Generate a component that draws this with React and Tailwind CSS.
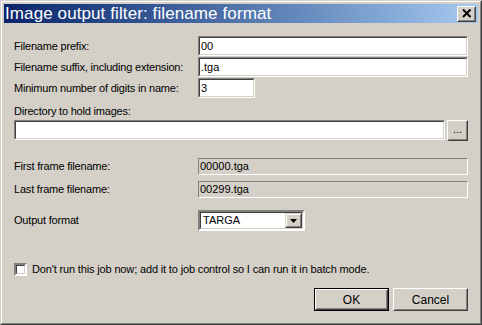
const SUNKEN = 'border-2 border-t-[#808080] border-l-[#808080] border-b-white border-r-white'
const SUNKEN_IN = 'border border-t-[#404040] border-l-[#404040] border-b-[#d4d0c8] border-r-[#d4d0c8]'

function TextBox({ value, className = '' }) {
  return (
    <div className={`border border-t-[#808080] border-l-[#808080] border-b-white border-r-white ${className}`}>
      <div className={`h-full bg-white ${SUNKEN_IN} flex items-center pl-[1px] leading-none`}>
        {value}
      </div>
    </div>
  )
}

function ReadOnly({ value }) {
  return (
    <div className="flex-1 h-[17px] border border-t-[#808080] border-l-[#808080] border-b-white border-r-white flex items-center pl-[1px] leading-none">
      {value}
    </div>
  )
}

function Button({ children, isDefault, className = '' }) {
  const inner = (
    <div className="h-full border border-t-white border-l-white border-b-[#404040] border-r-[#404040]">
      <div className="h-full border border-t-[#d4d0c8] border-l-[#d4d0c8] border-b-[#808080] border-r-[#808080] flex items-center justify-center text-[12px]">
        {children}
      </div>
    </div>
  )
  if (isDefault) {
    return <div className={`border border-black ${className}`}>{inner}</div>
  }
  return <div className={className}>{inner}</div>
}

function Row({ label, children, className = '' }) {
  return (
    <div className={`flex items-center ${className}`}>
      <div className="w-[184px] shrink-0 tracking-[-0.2px]">{label}</div>
      {children}
    </div>
  )
}

function TitleBar() {
  return (
    <div className="h-[19px] flex items-center bg-gradient-to-r from-[#0a246a] to-[#a6caf0] pl-[1px] pr-[2px]">
      <span className="flex-1 text-white text-[17px] leading-none tracking-[0.1px]">
        Image output filter: filename format
      </span>
      <div className="w-[19px] h-[16px] border border-t-white border-l-white border-b-[#404040] border-r-[#404040]">
        <div className="h-full border border-t-[#d4d0c8] border-l-[#d4d0c8] border-b-[#808080] border-r-[#808080] bg-[#d4d0c8] flex items-center justify-center">
          <svg width="10" height="9" viewBox="0 0 10 9">
            <path d="M1 0.5 L8.5 8 M8.5 0.5 L1 8" stroke="black" strokeWidth="2" />
          </svg>
        </div>
      </div>
    </div>
  )
}

export default function App() {
  return (
    <div className="w-[482px] h-[325px] bg-[#d4d0c8] font-['Liberation_Sans',Arial,sans-serif] text-[11px] text-black">
      <div className="h-full border border-t-[#d4d0c8] border-l-[#d4d0c8] border-b-[#404040] border-r-[#404040]">
        <div className="h-full border border-t-white border-l-white border-b-[#808080] border-r-[#808080] p-[2px] flex flex-col">
          <TitleBar />
          <div className="flex flex-col px-[10px] pt-[13px]">
            <Row label="Filename prefix:">
              <TextBox value="00" className="flex-1 h-[20px]" />
            </Row>
            <Row label="Filename suffix, including extension:" className="mt-[1px]">
              <TextBox value=".tga" className="flex-1 h-[20px]" />
            </Row>
            <Row label="Minimum number of digits in name:" className="mt-[1px]">
              <TextBox value="3" className="w-[57px] h-[20px]" />
            </Row>

            <div className="mt-[7px] leading-[13px] tracking-[-0.2px]">Directory to hold images:</div>
            <div className="flex mt-[2px] h-[20px]">
              <TextBox value="" className="flex-1 h-[20px]" />
              <Button className="w-[21px] h-[21px] ml-[2px]">
                <span className="text-[11px] leading-none -mt-[2px]">...</span>
              </Button>
            </div>

            <Row label="First frame filename:" className="mt-[18px]">
              <ReadOnly value="00000.tga" />
            </Row>
            <Row label="Last frame filename:" className="mt-[6px]">
              <ReadOnly value="00299.tga" />
            </Row>

            <Row label="Output format" className="mt-[12px]">
              <div className={`w-[107px] h-[21px] ${SUNKEN}`}>
                <div className={`h-full bg-white ${SUNKEN_IN} flex items-center`}>
                  <span className="flex-1 pl-[2px] leading-none">TARGA</span>
                  <div className="w-[17px] h-full border border-t-[#d4d0c8] border-l-[#d4d0c8] border-b-[#404040] border-r-[#404040]">
                    <div className="h-full border border-t-white border-l-white border-b-[#808080] border-r-[#808080] bg-[#d4d0c8] flex items-center justify-center">
                      <svg width="7" height="4" viewBox="0 0 7 4">
                        <path d="M0 0 H7 L3.5 4 Z" fill="black" />
                      </svg>
                    </div>
                  </div>
                </div>
              </div>
            </Row>

            <div className="flex items-center mt-[32px]">
              <div className={`w-[13px] h-[13px] ${SUNKEN}`}>
                <div className={`h-full bg-white ${SUNKEN_IN}`} />
              </div>
              <span className="ml-[5px] text-[11px] leading-none tracking-[-0.15px]">
                Don't run this job now; add it to job control so I can run it in batch mode.
              </span>
            </div>

            <div className="flex justify-end mt-[12px] gap-[4px]">
              <Button isDefault className="w-[75px] h-[23px]">OK</Button>
              <Button className="w-[75px] h-[23px]">Cancel</Button>
            </div>
          </div>
        </div>
      </div>
    </div>
  )
}
